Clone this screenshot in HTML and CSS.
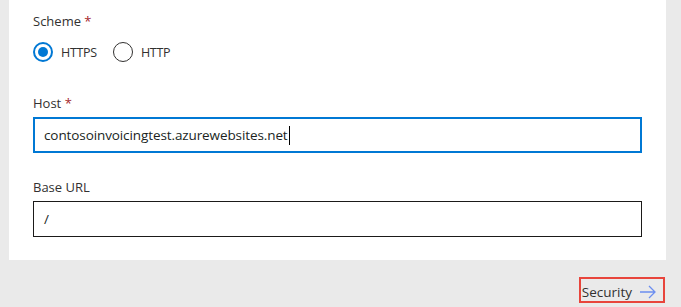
FILE: index.html
```html
<!DOCTYPE html>
<html lang="en">
<head>
    <meta charset="UTF-8">
    <meta name="viewport" content="width=device-width, initial-scale=1.0">
    <title>API settings</title>
    <link rel="stylesheet" href="styles.css">
</head>
<body>

<div class="card">
    <!-- Scheme -->
    <div class="field field-scheme">
        <label class="label">Scheme <span class="req">*</span></label>
        <div class="radio-group">
            <label class="radio checked"><span class="circle"></span>HTTPS</label>
            <label class="radio"><span class="circle"></span>HTTP</label>
        </div>
    </div>

    <!-- Host -->
    <div class="field">
        <label class="label">Host <span class="req">*</span></label>
        <div class="input focused">contosoinvoicingtest.azurewebsites.net<span class="caret"></span></div>
    </div>

    <!-- Base URL -->
    <div class="field last">
        <label class="label">Base URL</label>
        <div class="input">/</div>
    </div>
</div>

<div class="footer">
    <button class="next-btn">Security
        <svg width="18" height="14" viewBox="0 0 18 14"><path d="M1 7h15M10 1l6 6-6 6" fill="none" stroke="#6c8ef0" stroke-width="1.3"/></svg>
    </button>
</div>

</body>
</html>
```

FILE: styles.css
```css
body {
    margin: 0;
    background-color: #eaeaea;
    font-family: "Open Sans", "Noto Sans", sans-serif;
    color: #323130;
}
.card {
    background-color: #fff;
    margin-left: 9px;
    width: 657px;
    box-sizing: border-box;
    padding: 11px 24px 23px 24px;
}
.field {
    margin-bottom: 24px;
}
.field-scheme {
    margin-bottom: 29px;
}
.field.last {
    margin-bottom: 0;
}
.label {
    display: block;
    font-size: 13px;
    line-height: 20px;
    margin-bottom: 4px;
}
.field-scheme .label {
    margin-bottom: 9px;
}
.req {
    color: #a4262c;
}
.radio-group {
    display: flex;
    gap: 16px;
    height: 24px;
    align-items: center;
}
.radio {
    display: flex;
    align-items: center;
    font-size: 12.5px;
    letter-spacing: -0.3px;
}
.circle {
    width: 20px;
    height: 20px;
    box-sizing: border-box;
    border: 1px solid #323130;
    border-radius: 50%;
    margin-right: 8px;
    position: relative;
}
.radio.checked .circle {
    border: 2px solid #0078d4;
}
.radio.checked .circle::after {
    content: "";
    position: absolute;
    left: 3px;
    top: 3px;
    width: 10px;
    height: 10px;
    border-radius: 50%;
    background-color: #0078d4;
}
.input {
    height: 36px;
    box-sizing: border-box;
    border: 1px solid #1b1a19;
    padding: 0 10px;
    display: flex;
    align-items: center;
    font-size: 13.5px;
    letter-spacing: -0.1px;
    color: #201f1e;
}
.input.focused {
    border: 2px solid #0078d4;
    padding: 0 9px;
}
.caret {
    display: inline-block;
    width: 1px;
    height: 19px;
    background-color: #000;
    margin-left: 1px;
}
.footer {
    display: flex;
    justify-content: flex-end;
    padding: 17px 16px 0 0;
}
.next-btn {
    display: flex;
    align-items: center;
    gap: 7px;
    height: 26px;
    box-sizing: border-box;
    border: 2px solid #e8453c;
    background: none;
    padding: 4px 6px 0 1px;
    font-family: "Open Sans", "Noto Sans", sans-serif;
    font-size: 13.5px;
    color: #323130;
}
```
